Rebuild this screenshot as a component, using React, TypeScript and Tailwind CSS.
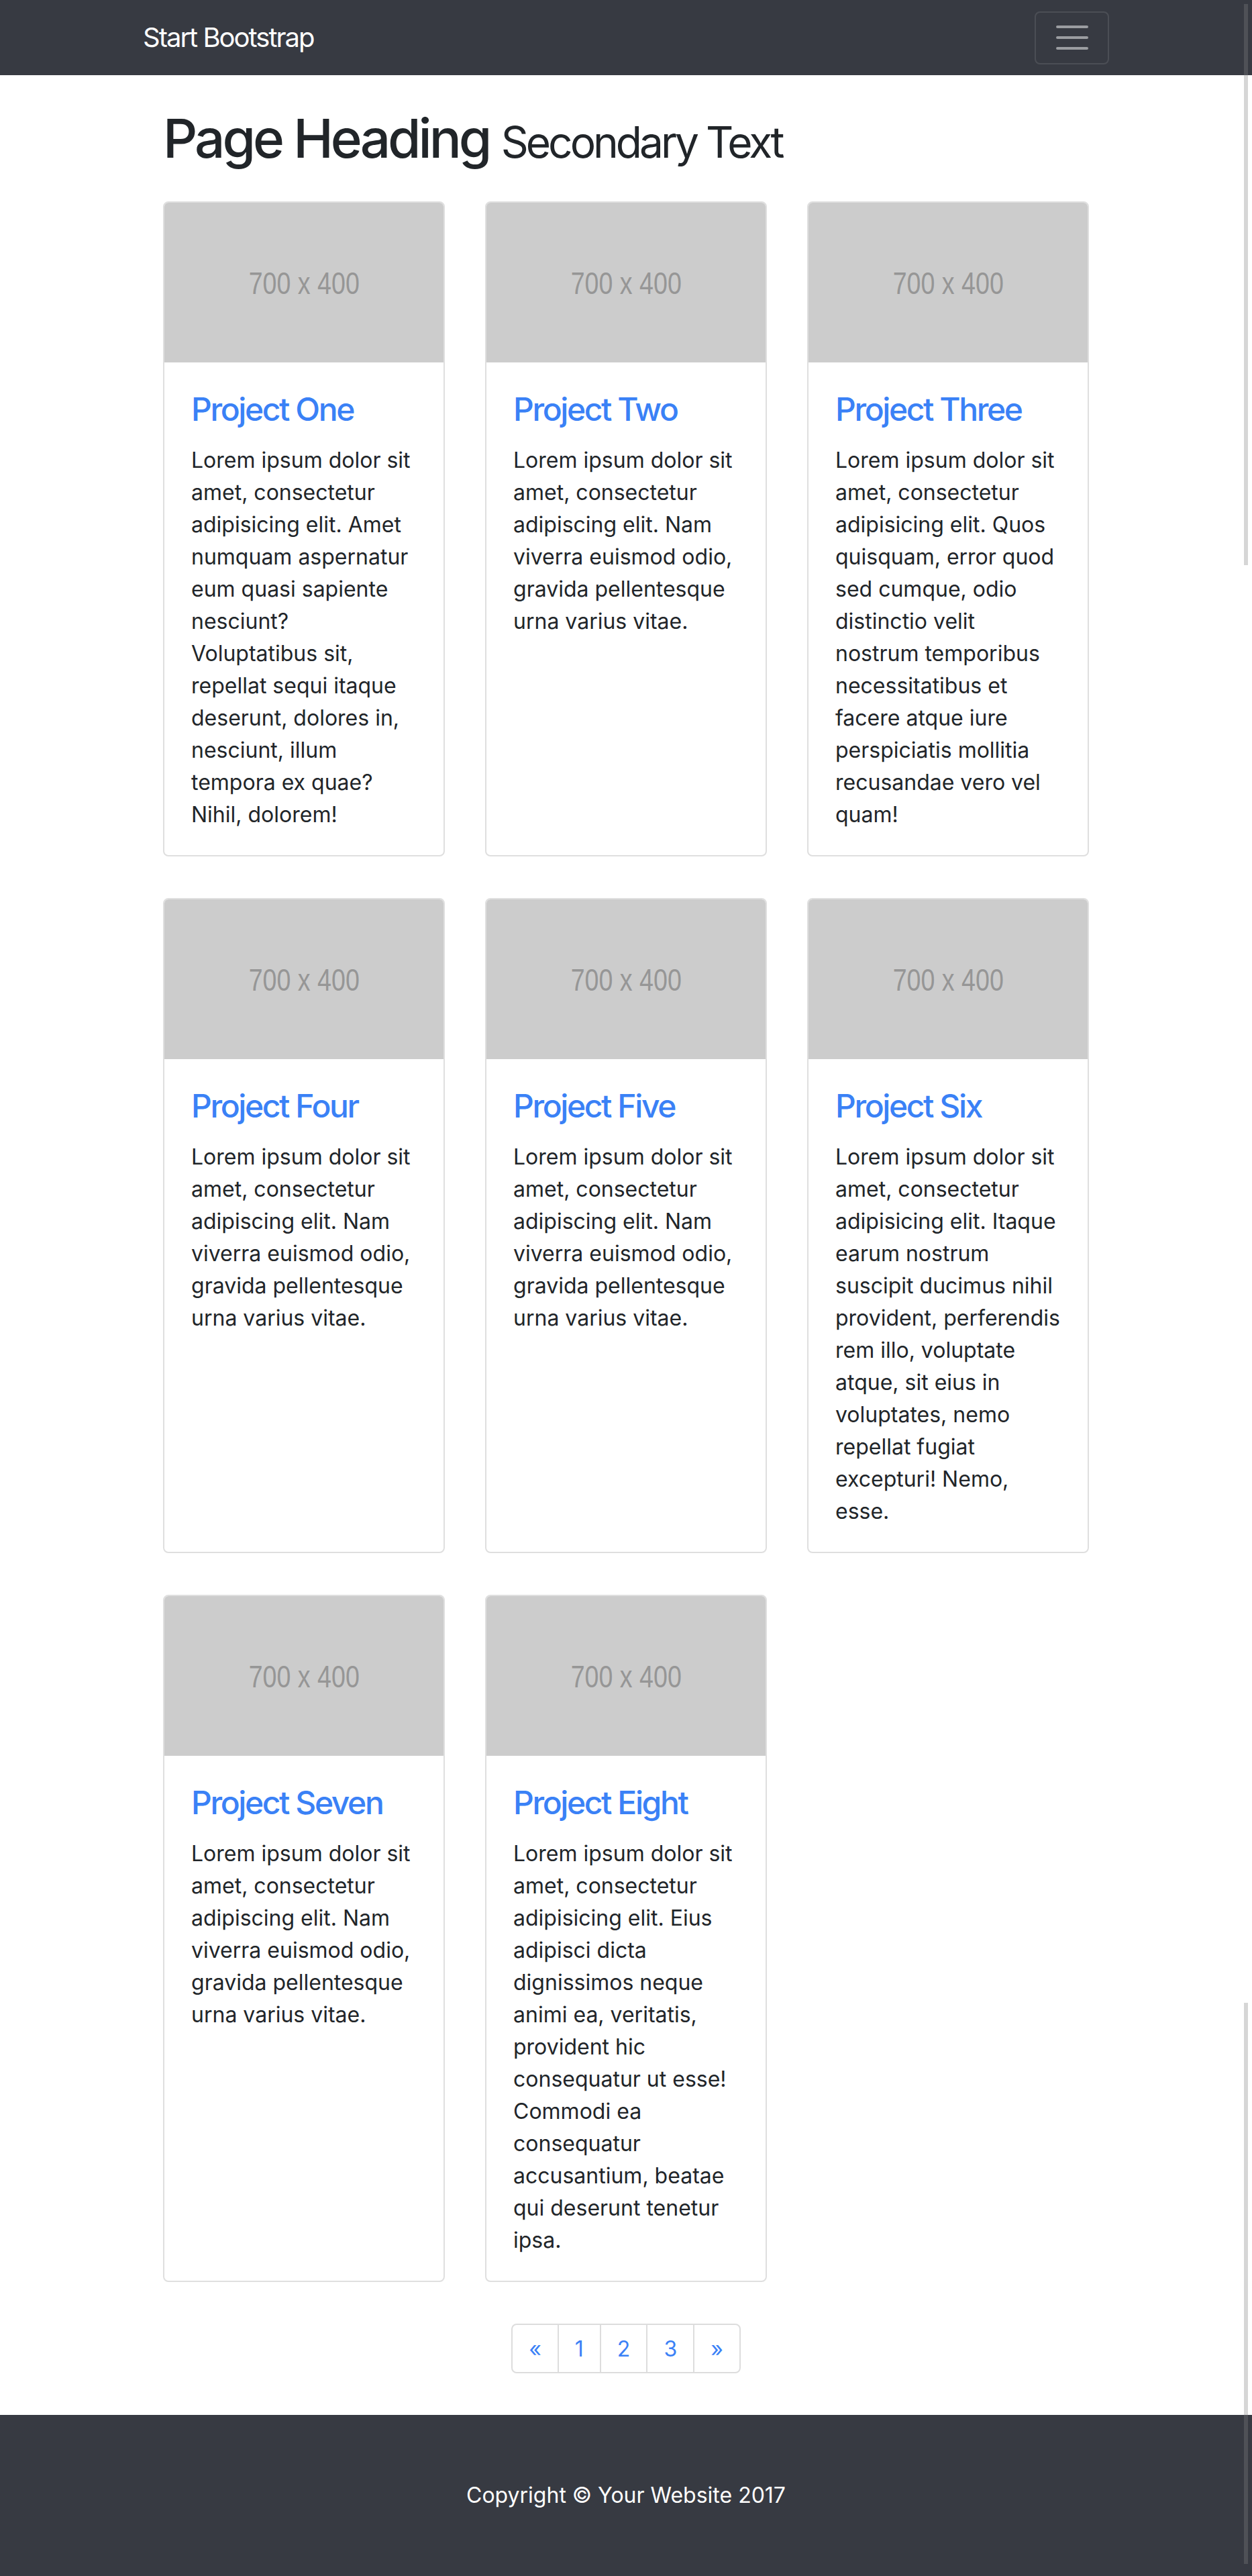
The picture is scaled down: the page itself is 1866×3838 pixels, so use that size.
import React from "react";

const projects = [
    { title: "Project One", text: "Lorem ipsum dolor sit amet, consectetur adipisicing elit. Amet numquam aspernatur eum quasi sapiente nesciunt? Voluptatibus sit, repellat sequi itaque deserunt, dolores in, nesciunt, illum tempora ex quae? Nihil, dolorem!" },
    { title: "Project Two", text: "Lorem ipsum dolor sit amet, consectetur adipiscing elit. Nam viverra euismod odio, gravida pellentesque urna varius vitae." },
    { title: "Project Three", text: "Lorem ipsum dolor sit amet, consectetur adipisicing elit. Quos quisquam, error quod sed cumque, odio distinctio velit nostrum temporibus necessitatibus et facere atque iure perspiciatis mollitia recusandae vero vel quam!" },
    { title: "Project Four", text: "Lorem ipsum dolor sit amet, consectetur adipiscing elit. Nam viverra euismod odio, gravida pellentesque urna varius vitae." },
    { title: "Project Five", text: "Lorem ipsum dolor sit amet, consectetur adipiscing elit. Nam viverra euismod odio, gravida pellentesque urna varius vitae." },
    { title: "Project Six", text: "Lorem ipsum dolor sit amet, consectetur adipisicing elit. Itaque earum nostrum suscipit ducimus nihil provident, perferendis rem illo, voluptate atque, sit eius in voluptates, nemo repellat fugiat excepturi! Nemo, esse." },
    { title: "Project Seven", text: "Lorem ipsum dolor sit amet, consectetur adipiscing elit. Nam viverra euismod odio, gravida pellentesque urna varius vitae." },
    { title: "Project Eight", text: "Lorem ipsum dolor sit amet, consectetur adipisicing elit. Eius adipisci dicta dignissimos neque animi ea, veritatis, provident hic consequatur ut esse! Commodi ea consequatur accusantium, beatae qui deserunt tenetur ipsa." },
];

const pages = ["«", "1", "2", "3", "»"];

function ProjectCard({ title, text }: { title: string; text: string }) {
    return (
        <div className="h-full flex flex-col border-2 border-[#dfdfdf] rounded-[8px] bg-white">
            <div className="h-[238px] bg-[#cccccc] rounded-t-[6px] flex items-center justify-center overflow-hidden">
                <span className="text-[47px] leading-none text-[#969696] scale-x-[0.8] font-['Liberation_Sans',sans-serif]">700 x 400</span>
            </div>
            <div className="px-[40px] pt-[42px] pb-[36px] flex-1">
                <h4 className="text-[48px] leading-[56px] font-medium text-[#3a81f6] mb-[24px] tracking-[-0.05em]">
                    <a href="#">{title}</a>
                </h4>
                <p className="text-[32px] leading-[48px] text-[#212529]">{text}</p>
            </div>
        </div>
    );
}

export default function App() {
    return (
        <div className="relative min-h-[3838px] flex flex-col bg-white font-['Inter',sans-serif] text-[#212529]">

            {/***************** Navbar ************/}
            <nav className="h-[112px] bg-[#373a42]">
                <div className="w-[1440px] mx-auto h-full flex items-center justify-between">
                    <a href="#" className="text-[40px] text-white tracking-[-0.05em]">Start Bootstrap</a>
                    <button className="w-[111px] h-[79px] border-2 border-white/10 rounded-[8px] flex items-center justify-center">
                        <svg width="60" height="60" viewBox="0 0 30 30">
                            <path d="M4 7h22M4 15h22M4 23h22" stroke="rgba(255,255,255,0.5)" strokeWidth="2" strokeLinecap="round" />
                        </svg>
                    </button>
                </div>
            </nav>

            {/***************** Content ************/}
            <div className="w-[1440px] mx-auto px-[30px] flex-1">
                <h1 className="mt-[46px] mb-[46px] h-[96px] text-[80px] leading-[96px] font-medium tracking-[-0.05em]">
                    Page Heading <small className="text-[64px] leading-none font-normal">Secondary Text</small>
                </h1>

                <div className="grid grid-cols-3 gap-x-[60px] gap-y-[62px]">
                    {projects.map((p) => (
                        <ProjectCard key={p.title} title={p.title} text={p.text} />
                    ))}
                </div>

                {/*************** Pagination*************/}
                <ul className="flex justify-center mt-[62px] mb-[61px]">
                    {pages.map((pg, i) => (
                        <li key={pg} className="-ml-[2px] first:ml-0">
                            <a
                                href="#"
                                className={
                                    "block h-[74px] px-[24px] py-[16px] text-[32px] leading-[40px] text-[#3a81f6] border-2 border-[#dddddd] bg-white " +
                                    (i === 0 ? "rounded-l-[8px]" : "") +
                                    (i === pages.length - 1 ? "rounded-r-[8px]" : "")
                                }
                            >
                                {pg}
                            </a>
                        </li>
                    ))}
                </ul>
            </div>

            {/*************** Footer *************/}
            <footer className="h-[240px] bg-[#373a42] py-[96px]">
                <p className="text-center text-white text-[32px] leading-[48px]">Copyright © Your Website 2017</p>
            </footer>

            {/* scrollbar remnants from the capture */}
            <div className="absolute left-[1854px] top-[6px] w-[6px] h-[836px] bg-[rgba(130,130,130,0.33)]" />
            <div className="absolute left-[1854px] top-[2984px] w-[6px] h-[836px] bg-[rgba(130,130,130,0.33)]" />
        </div>
    );
}
